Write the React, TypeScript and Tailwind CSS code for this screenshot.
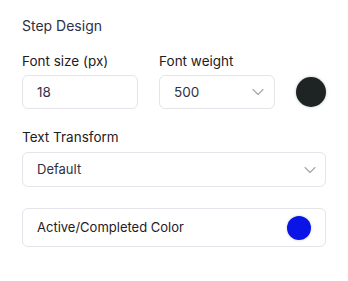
import { ChevronDown } from "lucide-react";

const App = () => {
  return (
    <div className="w-[348px] h-[281px] bg-white px-[22px] pt-[16px] font-['Inter',sans-serif]">
      <h2 className="text-[14px] leading-5 text-[#2d3148]">Step Design</h2>

      <div className="mt-[15px] flex items-end gap-[21px]">
        <div className="flex flex-col w-[117px]">
          <label className="text-[13.5px] leading-5 text-[#1f2024]">Font size (px)</label>
          <div className="mt-[4px] h-[34px] rounded-md border border-[#e4e4ea] flex items-center pl-[14px] text-[13.5px] text-[#2d3148]">
            18
          </div>
        </div>
        <div className="flex flex-col w-[117px]">
          <label className="text-[13.5px] leading-5 text-[#1f2024]">Font weight</label>
          <div className="mt-[4px] h-[34px] rounded-md border border-[#e4e4ea] flex items-center justify-between pl-[14px] pr-[6px] text-[13.5px] text-[#2d3148]">
            <span>500</span>
            <ChevronDown className="w-5 h-5 text-[#a3a6b0]" strokeWidth={1.3} />
          </div>
        </div>
        <div className="ml-auto mb-[2px] w-[30px] h-[30px] rounded-full bg-[#1e2323] shadow-[0_0_3px_rgba(0,0,0,0.25)]" />
      </div>

      <div className="mt-[18px] flex flex-col">
        <label className="text-[13.5px] leading-5 text-[#1f2024]">Text Transform</label>
        <div className="mt-[5px] h-[35px] rounded-md border border-[#e4e4ea] flex items-center justify-between pl-[14px] pr-[5px] text-[13px] text-[#2d3148]">
          <span>Default</span>
          <ChevronDown className="w-5 h-5 text-[#a3a6b0]" strokeWidth={1.3} />
        </div>
      </div>

      <div className="mt-[21px] h-[39px] rounded-md border border-[#e4e4ea] flex items-center justify-between pl-[14px] pr-[14px]">
        <span className="text-[13px] text-[#1f2024]">Active/Completed Color</span>
        <div className="w-[24px] h-[24px] rounded-full bg-[#0a14e6] shadow-[0_0_3px_rgba(0,0,0,0.2)]" />
      </div>
    </div>
  );
};

export default App;
